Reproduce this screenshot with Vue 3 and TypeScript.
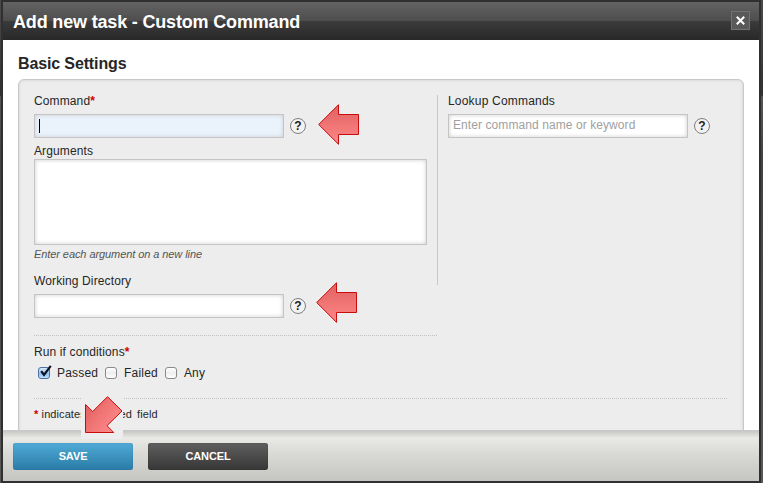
<script setup lang="ts">
import { ref } from 'vue'

interface Condition {
  label: string
  checked: boolean
}

const conditions = ref<Condition[]>([
  { label: 'Passed', checked: true },
  { label: 'Failed', checked: false },
  { label: 'Any', checked: false },
])
const command = ref('')
const args = ref('')
const directory = ref('')
const lookup = ref('')
</script>

<template>
  <div class="window">
    <section class="dialog">
      <header class="titlebar">
        <h1>Add new task - Custom Command</h1>
        <button class="close" aria-label="Close">
          <svg width="9" height="9" viewBox="0 0 9 9"><path d="M0.8 0.8 8.2 8.2M8.2 0.8 0.8 8.2" stroke="#fff" stroke-width="2" /></svg>
        </button>
      </header>

      <main class="content">
        <h2>Basic Settings</h2>
        <div class="panel">
          <div class="columns">
            <div class="main-col">
              <label class="label">Command<b>*</b></label>
              <div class="line">
                <div class="focus-field">
                  <input v-model="command" class="field focused" type="text" />
                  <i class="caret"></i>
                </div>
                <span class="help">?</span>
              </div>
              <label class="label args-label">Arguments</label>
              <textarea v-model="args" class="field area"></textarea>
              <p class="hint">Enter each argument on a new line</p>
              <label class="label">Working Directory</label>
              <div class="line">
                <input v-model="directory" class="field" type="text" />
                <span class="help">?</span>
              </div>
            </div>
            <div class="lookup-col">
              <label class="label">Lookup Commands</label>
              <div class="line">
                <input v-model="lookup" class="field lookup" type="text" placeholder="Enter command name or keyword" />
                <span class="help">?</span>
              </div>
            </div>
          </div>

          <div class="conditions">
            <div class="label run-label">Run if conditions<b>*</b></div>
            <div class="checks">
              <label v-for="c in conditions" :key="c.label" class="check">
                <span class="box" :class="{ on: c.checked }">
                  <svg v-if="c.checked" width="14" height="14" viewBox="0 0 14 14"><path d="M2.2 6.2 5 10 11.8 0.8" fill="none" stroke="#0b1420" stroke-width="2.2" /></svg>
                </span>
                <input v-model="c.checked" type="checkbox" />
                <span>{{ c.label }}</span>
              </label>
            </div>
          </div>
          <p class="note"><b>*</b> indicates required field</p>
        </div>
      </main>

      <footer class="footer">
        <button class="btn save">SAVE</button>
        <button class="btn cancel">CANCEL</button>
      </footer>
    </section>

    <svg class="arrow arrow-command" width="42" height="42" viewBox="0 0 42 42">
      <defs>
        <linearGradient id="red" x1="0" y1="0" x2="0" y2="1">
          <stop offset="0" stop-color="#e06060" />
          <stop offset="1" stop-color="#ff8888" />
        </linearGradient>
        <linearGradient id="redDiagonal" x1="0" y1="0.2" x2="0.8" y2="0.8">
          <stop offset="0" stop-color="#e06060" />
          <stop offset="1" stop-color="#ff8888" />
        </linearGradient>
      </defs>
      <path d="M.7 20.5 20.5.7V10.5H40.5V30.5H20.5V40.3Z" fill="url(#red)" stroke="#c60c0c" />
    </svg>
    <svg class="arrow arrow-directory" width="42" height="42" viewBox="0 0 42 42">
      <path d="M.7 20.5 20.5.7V10.5H40.5V30.5H20.5V40.3Z" fill="url(#red)" stroke="#c60c0c" />
    </svg>
    <svg class="arrow arrow-save" width="42" height="43" viewBox="0 0 42 43">
      <path d="M4.5 8.5 11.7 15.5 26.5.7 41 15 26 29.7 32.7 36.5H4.5Z" fill="url(#redDiagonal)" stroke="#c60c0c" />
    </svg>
  </div>
</template>

<style>
body {
  background: #555;
}
</style>

<style scoped>
* {
  box-sizing: border-box;
}
.window {
  position: relative;
  width: 763px;
  height: 483px;
  padding: 0 2px 0 1px;
  overflow: hidden;
  background: linear-gradient(#4a4a4a, #3c3c3c 60px, #303030 95px, #555 97px, #424242 160px, #585858);
  font-family: "Liberation Sans", Arial, sans-serif;
  font-size: 12px;
  color: #262626;
}
.dialog {
  display: flex;
  flex-direction: column;
  height: 483px;
  border: 2px solid #303030;
  background: #fff;
}
.titlebar {
  flex: none;
  display: flex;
  justify-content: space-between;
  height: 38px;
  padding: 9px 9px 0 10px;
  background: linear-gradient(#636363, #4d4d4d 19px, #3b3b3b 19px, #282828);
}
h1 {
  margin: 0;
  padding-top: 1px;
  font-size: 18px;
  line-height: 21px;
  letter-spacing: -0.17px;
  color: #fff;
  white-space: nowrap;
}
.close {
  display: grid;
  place-items: center;
  width: 19px;
  height: 19px;
  padding: 0;
  border: 1px solid #737373;
  background: #595959;
}
.content {
  flex: none;
  height: 390px;
  padding: 14px 15px 0;
  overflow: hidden;
}
h2 {
  margin: 0 0 6px;
  font-size: 16px;
  line-height: 19px;
  letter-spacing: -0.13px;
}
.panel {
  height: 370px;
  padding: 15px 15px 0;
  border: 1px solid #c8c8c8;
  border-radius: 6px;
  background: #ededed;
  box-shadow: inset 0 0 3px #ccc;
}
.columns {
  display: flex;
}
.main-col {
  width: 403px;
  height: 240px;
}
.lookup-col {
  height: 190px;
  padding-left: 10px;
  border-left: 1px solid #c8c8c8;
}
.lookup-col .label {
  letter-spacing: 0.2px;
}
.label {
  display: block;
  height: 19px;
  line-height: 13px;
  letter-spacing: 0.12px;
}
.label b,
.note b {
  color: #c00;
}
.line {
  display: flex;
  align-items: center;
  gap: 6px;
}
.field {
  display: block;
  width: 250px;
  height: 24px;
  margin: 0;
  padding: 0 4px 2px;
  border: 1px solid #c4c4c4;
  border-radius: 0;
  outline: 0;
  background: #fff;
  box-shadow: inset 0 0 4px #ccc;
  font: 12px "Liberation Sans", Arial, sans-serif;
}
.focused {
  background: #eaf3fc;
}
.focus-field {
  position: relative;
}
.caret {
  position: absolute;
  left: 5px;
  top: 5px;
  width: 1px;
  height: 14px;
  background: #000;
}
.lookup {
  width: 240px;
  letter-spacing: 0.08px;
}
.lookup::placeholder {
  color: #a0a0a0;
}
.help {
  display: grid;
  place-items: center;
  width: 16px;
  height: 16px;
  border: 1.5px solid #808080;
  border-radius: 50%;
  background: #f2f2f2;
  font-size: 12px;
  font-weight: bold;
  line-height: 12px;
  color: #222;
}
.args-label {
  height: 14px;
  margin-top: 7px;
}
.area {
  width: 393px;
  height: 86px;
  resize: none;
}
.hint {
  height: 30px;
  margin: 0;
  padding-top: 3px;
  font-size: 11px;
  line-height: 13px;
  font-style: italic;
  letter-spacing: -0.08px;
  color: #555;
}
.conditions {
  height: 63px;
  padding-top: 11px;
  background: repeating-linear-gradient(90deg, #c0c0c0 0 1px, transparent 1px 2px) 0 0 / 403px 1px no-repeat;
}
.run-label {
  height: 19px;
}
.checks {
  display: flex;
  padding-left: 4px;
}
.check {
  display: flex;
  align-items: center;
  height: 16px;
  margin-right: 7px;
  letter-spacing: 0.18px;
}
.check input {
  display: none;
}
.box {
  position: relative;
  width: 12px;
  height: 12px;
  margin-right: 7px;
  border: 1px solid #898989;
  border-radius: 3px;
  background: linear-gradient(#fff, #eee 50%, #fff);
}
.box.on {
  border-color: #4f6f9f;
  background: linear-gradient(#d6e8fb, #8fc0f0 60%, #bfe4ff);
}
.box svg {
  position: absolute;
  left: 0;
  top: -3px;
}
.note {
  margin: 0;
  padding-top: 10px;
  font-size: 11px;
  line-height: 13px;
  letter-spacing: 0.08px;
  word-spacing: 2px;
  background: repeating-linear-gradient(90deg, #c0c0c0 0 1px, transparent 1px 2px) 0 0 / 100% 1px no-repeat;
}
.note b {
  letter-spacing: -1.8px;
}
.footer {
  flex: none;
  display: flex;
  gap: 15px;
  height: 51px;
  padding: 13px 10px 0;
  background: linear-gradient(#c6c6c4, #cbcbc9 2px, #e9eae5 8px, #d9dad6 24px, #c5c6c2);
}
.btn {
  width: 120px;
  height: 27px;
  padding: 0 0 2px;
  border: 0;
  border-radius: 3px;
  font: bold 11px "Liberation Sans", Arial, sans-serif;
  letter-spacing: -0.1px;
  color: #fff;
}
.save {
  background: linear-gradient(#50aad6, #2a7ba7);
  box-shadow: inset 0 0 1px #17618c;
}
.cancel {
  background: linear-gradient(#5f5f5f, #363636);
  box-shadow: inset 0 0 1px #222;
}
.arrow {
  position: absolute;
}
.arrow-command {
  left: 318px;
  top: 104px;
}
.arrow-directory {
  left: 316px;
  top: 282px;
}
.arrow-save {
  left: 81px;
  top: 396px;
  background: #ededed;
}
</style>
